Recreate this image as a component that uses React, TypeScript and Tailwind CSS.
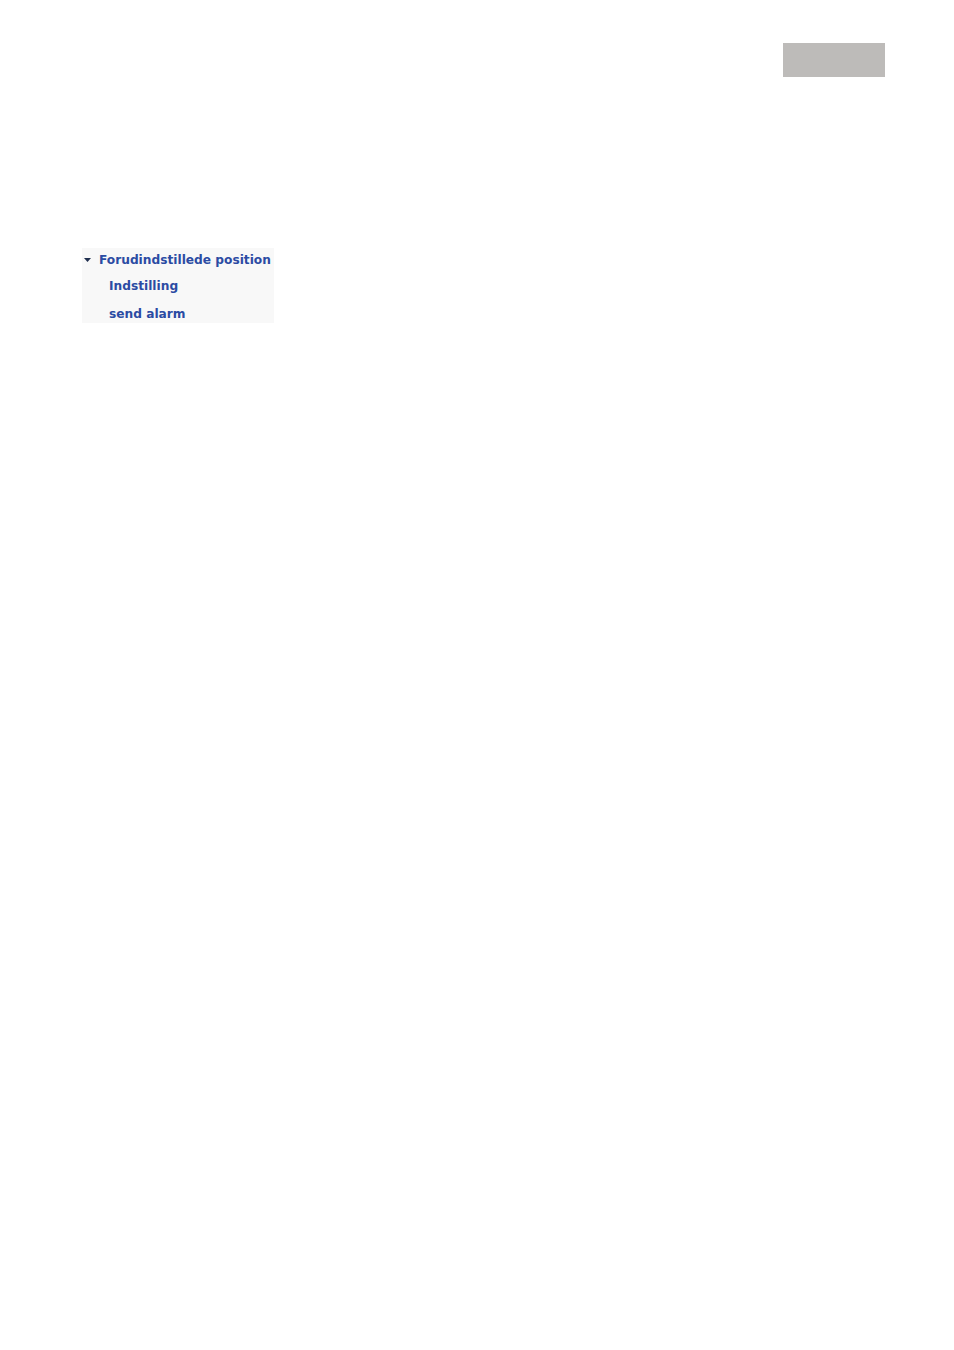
import React from 'react';

const items = ['Indstilling', 'send alarm'];

const App: React.FC = () => {
  return (
    <div className="min-h-[1350px] w-full bg-white font-['DejaVu_Sans',sans-serif]">
      {/* top bar */}
      <div className="flex justify-end pt-[43px] pr-[69px]">
        <div className="h-[34px] w-[102px] bg-[#bdbbb9]" />
      </div>

      {/* preset menu */}
      <div className="ml-[82px] mt-[171px] h-[75px] w-[192px] bg-[#f8f8f8]">
        <div className="flex h-[24px] items-center">
          <svg className="ml-[2px] mr-[8px] h-[4px] w-[7px]" viewBox="0 0 7 4">
            <polygon points="0,0 7,0 3.5,4" fill="#1f2f4f" />
          </svg>
          <span className="text-[12.2px] font-bold text-[#2b4ba3]">Forudindstillede position</span>
        </div>
        {items.map((item) => (
          <div key={item} className="flex h-[28px] items-center pl-[27px]">
            <span className="text-[12.2px] font-bold text-[#2b4ba3]">{item}</span>
          </div>
        ))}
      </div>
    </div>
  );
};

export default App;
